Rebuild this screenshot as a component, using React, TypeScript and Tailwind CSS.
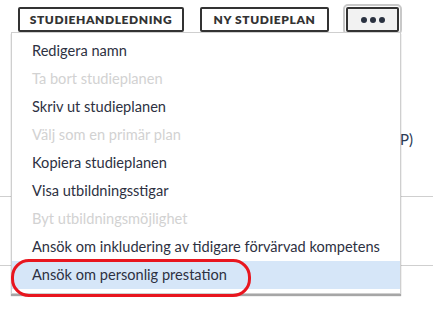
import React from "react";

const items: { label: string; disabled?: boolean; active?: boolean }[] = [
  { label: "Redigera namn" },
  { label: "Ta bort studieplanen", disabled: true },
  { label: "Skriv ut studieplanen" },
  { label: "Välj som en primär plan", disabled: true },
  { label: "Kopiera studieplanen" },
  { label: "Visa utbildningsstigar" },
  { label: "Byt utbildningsmöjlighet", disabled: true },
  { label: "Ansök om inkludering av tidigare förvärvad kompetens" },
  { label: "Ansök om personlig prestation", active: true },
];

export default function App() {
  return (
    <div
      className="relative w-[433px] h-[313px] overflow-hidden bg-white"
      style={{ fontFamily: "Lato, 'Open Sans', sans-serif" }}
    >
      <div className="flex items-start pl-[18px] pt-[7px] gap-[16px]">
        <button className="h-[25px] w-[166px] border-2 border-[#333] rounded-[2px] bg-white text-[12px] font-extrabold tracking-[0.6px] text-[#333] leading-none">
          STUDIEHANDLEDNING
        </button>
        <button className="h-[25px] w-[129px] border-2 border-[#333] rounded-[2px] bg-white text-[12px] font-extrabold tracking-[0.6px] text-[#333] leading-none">
          NY STUDIEPLAN
        </button>
        <button className="ml-[1px] h-[25px] w-[53px] border-2 border-[#333] rounded-[2px] bg-[#f2f2f2] outline-2 outline-[#c8c8c8] outline-offset-[1px] flex items-center justify-center gap-[3px]">
          <span className="w-[6px] h-[6px] rounded-full bg-[#2a3240]" />
          <span className="w-[6px] h-[6px] rounded-full bg-[#2a3240]" />
          <span className="w-[6px] h-[6px] rounded-full bg-[#2a3240]" />
        </button>
      </div>

      <div className="mt-[100px] flex flex-col">
        <div className="flex justify-end pr-[20px] text-[15px] text-[#2b3a55] leading-none">(HP)</div>
        <div className="mt-[49px] h-[1px] bg-[#cfcfcf]" />
        <div className="mt-[68px] h-[1px] bg-[#cfcfcf]" />
      </div>

      <div className="absolute left-[11px] top-[32px] w-[390px] bg-white border border-[#cfcfcf] shadow-[0_2px_1px_rgba(0,0,0,0.35)] pt-[4px] pb-[4px]">
        {items.map((it) => (
          <div
            key={it.label}
            className={
              "h-[28px] flex items-center pl-[20px] text-[14.6px] " +
              (it.disabled ? "text-[#d2d2d2] " : "text-[#2d3142] ") +
              (it.active ? "bg-[#d6e6f8]" : "")
            }
          >
            {it.label}
          </div>
        ))}
      </div>

      <div className="absolute left-[11px] top-[259px] w-[240px] h-[38px] border-[3px] border-[#e8161f] rounded-[18px]" />
    </div>
  );
}
